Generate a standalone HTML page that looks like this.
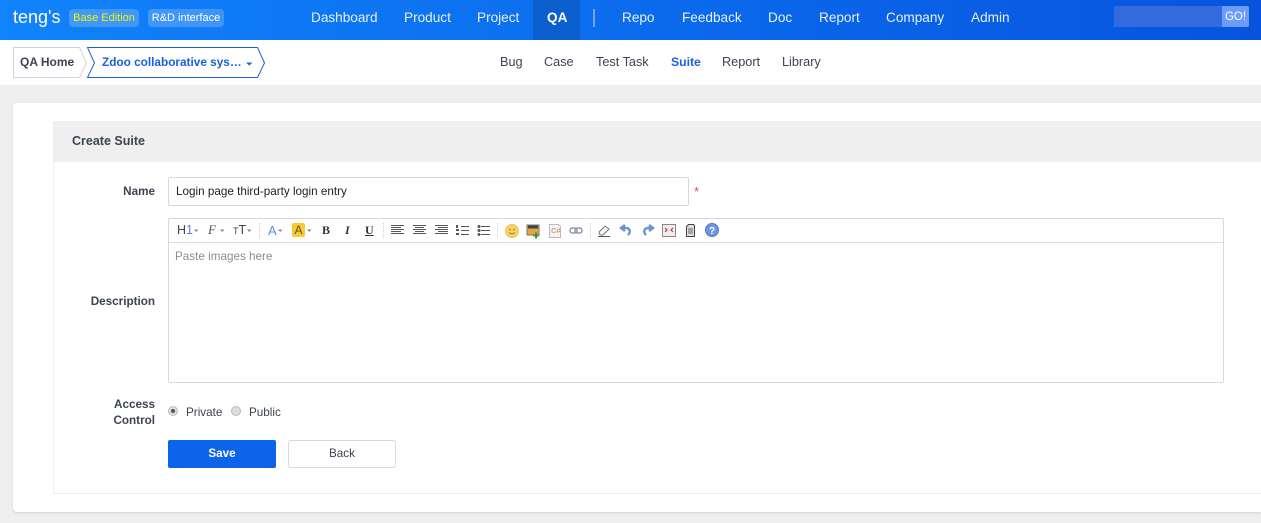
<!DOCTYPE html>
<html lang="en"><head><meta charset="utf-8"><title>Create Suite</title>
<style>
*{box-sizing:border-box}
html,body{margin:0;padding:0}
body{width:1261px;height:523px;overflow:hidden;position:relative;background:#efefef;font-family:"Liberation Sans",sans-serif;font-size:11.7px;color:#3c4353}
.a{position:absolute;white-space:nowrap}
#hd{left:0;top:0;width:1261px;height:40px;background:linear-gradient(90deg,#1183fb,#0654de)}
.n{position:absolute;top:0;line-height:35px;height:40px;font-size:13.6px;color:#e6f0ff;white-space:nowrap}
.sub{position:absolute;top:54px;line-height:17px;font-size:12.7px;color:#3c4353;white-space:nowrap}
.lab{position:absolute;font-weight:bold;text-align:right;right:1106px;white-space:nowrap;color:#3c4353}
svg{position:absolute;overflow:visible}
.t{position:absolute;font-family:"Liberation Sans",sans-serif}
.bl{filter:blur(.25px)}
</style></head><body>
<div class="a" id="hd"></div>
<div class="a" style="left:13px;top:6px;font-size:18px;line-height:23px;color:#fff">teng's</div>
<div class="a" style="left:69px;top:9px;width:70px;height:18px;background:rgba(255,255,255,.2);border-radius:4px;color:#f5f500;font-size:11px;line-height:18px;text-align:center">Base Edition</div>
<div class="a" style="left:148px;top:9px;width:76px;height:18px;background:rgba(255,255,255,.2);border-radius:4px;color:#fff;font-size:11px;line-height:18px;text-align:center">R&amp;D interface</div>
<div class="a" style="left:533px;top:0;width:47px;height:40px;background:#0c5fcf"></div>
<div class="n" style="left:311px">Dashboard</div>
<div class="n" style="left:404px">Product</div>
<div class="n" style="left:477px">Project</div>
<div class="n" style="left:547px;font-weight:bold;color:#fff">QA</div>
<div class="a" style="left:593px;top:9px;width:2px;height:18px;background:rgba(255,255,255,.4)"></div>
<div class="n" style="left:622px">Repo</div>
<div class="n" style="left:682px">Feedback</div>
<div class="n" style="left:768px">Doc</div>
<div class="n" style="left:819px">Report</div>
<div class="n" style="left:886px">Company</div>
<div class="n" style="left:971px">Admin</div>
<div class="a" style="left:1114px;top:6px;width:108px;height:21px;background:#336bdc"></div>
<div class="a" style="left:1222px;top:6px;width:27px;height:21px;background:#6c9bfb;border-radius:0 2px 2px 0;color:#fff;font-size:11.5px;line-height:22px;text-align:center">GO!</div>

<div class="a" style="left:0;top:40px;width:1261px;height:45px;background:#fff"></div>
<svg style="left:0;top:40px" width="280" height="45">
<path d="M13.5 7.500H79.500L86.500 23L79.500 37.500H13.500Z" fill="#fff" stroke="#d0d4e0"/>
<path d="M87.500 7.500H257.500L264.500 23L257.500 37.500H87.500L94.500 23Z" fill="#fff" stroke="#1a5fdc"/>
<path d="M246 22.500H252.500L249.200 25.500Z" fill="#1a5fdc"/>
</svg>
<div class="a" style="left:20px;top:54px;font-size:12px;font-weight:bold;line-height:17px;color:#3c4353">QA Home</div>
<div class="a" style="left:102px;top:54px;font-size:11.8px;font-weight:bold;line-height:17px;color:#1a5fdc">Zdoo collaborative sys…</div>
<div class="sub" style="left:500px">Bug</div>
<div class="sub" style="left:544px">Case</div>
<div class="sub" style="left:596px">Test Task</div>
<div class="sub" style="left:671px;font-weight:bold;color:#1a5fdc;font-size:12.2px">Suite</div>
<div class="sub" style="left:722px">Report</div>
<div class="sub" style="left:782px">Library</div>

<div class="a" style="left:13px;top:103px;width:1248px;height:409px;background:#fff;border-radius:4px 0 0 4px;box-shadow:0 1px 2px rgba(0,0,0,.12)"></div>
<div class="a" style="left:53px;top:121px;width:1208px;height:373px;background:#fff;border:1px solid #efefef;border-right:0"></div>
<div class="a" style="left:53px;top:121px;width:1208px;height:41px;background:#efefef"></div>
<div class="a" style="left:72px;top:133px;font-size:12.5px;font-weight:bold;line-height:17px;color:#3c4353">Create Suite</div>

<div class="lab" style="top:184px;line-height:16px">Name</div>
<div class="a" style="left:168px;top:177px;width:521px;height:29px;border:1px solid #d5d8df;border-radius:2px;background:#fff;line-height:28px;padding-left:7px;color:#222">Login page third-party login entry</div>
<div class="a" style="left:694px;top:185px;color:#f5455c;font-size:13px;line-height:14px">*</div>

<div class="lab" style="top:294px;line-height:16px">Description</div>
<div class="a" style="left:168px;top:218px;width:1056px;height:165px;border:1px solid #d5d8df;border-radius:2px;background:#fff"></div>
<div class="a" style="left:169px;top:242px;width:1054px;height:1px;background:#dcdcdc"></div>
<div class="a" style="left:175px;top:249px;line-height:16px;color:#8d8d8d">Paste images here</div>

<!-- toolbar -->
<div class="t" style="left:177px;top:223px;font-size:12.5px;line-height:15px;color:#444">H<span style="color:#5b7fc7">1</span></div>
<div class="t" style="left:208px;top:222px;font-family:'Liberation Serif',serif;font-style:italic;font-size:13px;line-height:15px;color:#555">F</div>
<div class="t" style="left:233px;top:223px;font-size:12.5px;line-height:15px;color:#444"><span style="font-size:9px">T</span>T</div>
<div class="t" style="left:268px;top:223px;font-size:13px;line-height:15px;color:#5c8ae6">A</div>
<div class="a" style="left:292px;top:223px;width:13px;height:14px;background:#fdc92f;border-radius:2px;font-size:12px;line-height:14px;text-align:center;color:#555">A</div>
<div class="t" style="left:322px;top:223px;font-family:'Liberation Serif',serif;font-size:12px;font-weight:bold;line-height:15px;color:#333">B</div>
<div class="t" style="left:345px;top:223px;font-family:'Liberation Serif',serif;font-size:12px;font-weight:bold;font-style:italic;line-height:15px;color:#333">I</div>
<div class="t" style="left:365px;top:223px;font-family:'Liberation Serif',serif;font-size:12px;font-weight:bold;text-decoration:underline;line-height:15px;color:#333">U</div>
<svg class="bl" style="left:0;top:0" width="760" height="260">
<g fill="#888"><path d="M194 229.500h4.500l-2.250 2.500zM220 229.500h4.500l-2.250 2.500zM247 229.500h4.500l-2.250 2.500zM278 229.500h4.500l-2.250 2.500zM307 229.500h4.500l-2.250 2.500z"/></g>
<g stroke="#ccc" stroke-dasharray="1 1"><path d="M259.500 223v15M383.500 223v15M497.500 223v15M590.500 223v15"/></g>
<g stroke="#555" fill="none" stroke-width="1.100">
<path d="M391 225.500h13M391 227.500h10M391 229.500h13M391 231.500h10M391 233.500h13"/>
<path d="M413 225.500h13M415 227.500h9M413 229.500h13M415 231.500h9M413 233.500h13"/>
<path d="M435 225.500h13M438 227.500h10M435 229.500h13M438 231.500h10M435 233.500h13"/>
<path d="M461 226.500h8M461 230.500h8M461 234.500h8M481 226.500h9M481 230.500h9M481 234.500h9"/>
</g>
<g fill="#555"><path d="M456 225h2v3h-2zM456 229h3v2h-3zM456 233h3v2h-3z"/><circle cx="479" cy="226.500" r="1.500"/><circle cx="479" cy="230.500" r="1.500"/><circle cx="479" cy="234.500" r="1.500"/></g>
<circle cx="512" cy="231" r="6.500" fill="#f5d36a" stroke="#ecc452"/>
<circle cx="510" cy="229.500" r=".8" fill="#8a6a15"/><circle cx="514" cy="229.500" r=".8" fill="#8a6a15"/>
<path d="M509 232.500q3 2.500 6 0" stroke="#a9801c" fill="none"/>
<rect x="527" y="225" width="12" height="10" fill="#e5a63a" stroke="#777"/>
<rect x="528" y="225.500" width="10" height="3" fill="#444"/>
<path d="M533 235.500h6M536 232.500v6" stroke="#3a9a3a" stroke-width="2"/>
<path d="M549.500 224.500h9l2 2v11h-11z" fill="#f5f5f5" stroke="#bbb"/>
<text x="551" y="233" font-size="7.500" font-weight="bold" fill="#c9a27c" font-family="Liberation Sans">C#</text>
<rect x="570" y="228" width="7" height="5" rx="2.500" fill="none" stroke="#8a97ad" stroke-width="1.500"/>
<rect x="575" y="228" width="7" height="5" rx="2.500" fill="none" stroke="#8a97ad" stroke-width="1.500"/>
<path d="M599 232l6-6 4 3-6 6h-3z" fill="#f4f4f4" stroke="#777"/>
<path d="M598 236.500h12" stroke="#555"/>
<path d="M628 235c3-3 2-7-2-7h-3M625 225l-4 3 4 3" fill="none" stroke="#6c92da" stroke-width="2.400"/>
<path d="M646 235c-3-3-2-7 2-7h3M649 225l4 3-4 3" fill="none" stroke="#6c92da" stroke-width="2.400"/>
<rect x="662.500" y="224.500" width="13" height="12" fill="#f0eeee" stroke="#888"/>
<path d="M665 228l2 2-2 2M673 228l-2 2 2 2" fill="none" stroke="#c83a3a" stroke-width="1.200"/>
<path d="M686.500 226.500l2-2h5l1 1v11h-8z" fill="#ddd" stroke="#444"/>
<path d="M688 229h5M688 231h5M688 233h5" stroke="#666"/>
<circle cx="712" cy="230" r="6.500" fill="#6f97e0" stroke="#4f78c5"/>
<text x="709" y="234" font-size="10" font-weight="bold" fill="#fff" font-family="Liberation Sans">?</text>
</svg>

<div class="a" style="right:1106px;top:397px;width:60px;text-align:right;font-weight:bold;line-height:16px;white-space:normal">Access Control</div>
<svg style="left:0;top:0" width="300" height="430">
<circle cx="173" cy="411" r="4.500" fill="#ddd" stroke="#bbb"/><circle cx="173" cy="411" r="2" fill="#555"/>
<circle cx="236" cy="411" r="4.500" fill="#ddd" stroke="#bbb"/>
</svg>
<div class="a" style="left:186px;top:405px;line-height:16px">Private</div>
<div class="a" style="left:249px;top:405px;line-height:16px">Public</div>
<div class="a" style="left:168px;top:440px;width:108px;height:28px;background:#0c64eb;border-radius:2px;color:#fff;font-weight:bold;line-height:28px;text-align:center">Save</div>
<div class="a" style="left:288px;top:440px;width:108px;height:28px;background:#fff;border:1px solid #d5d8e2;border-radius:3px;line-height:26px;text-align:center;color:#3c4353">Back</div>
</body></html>
